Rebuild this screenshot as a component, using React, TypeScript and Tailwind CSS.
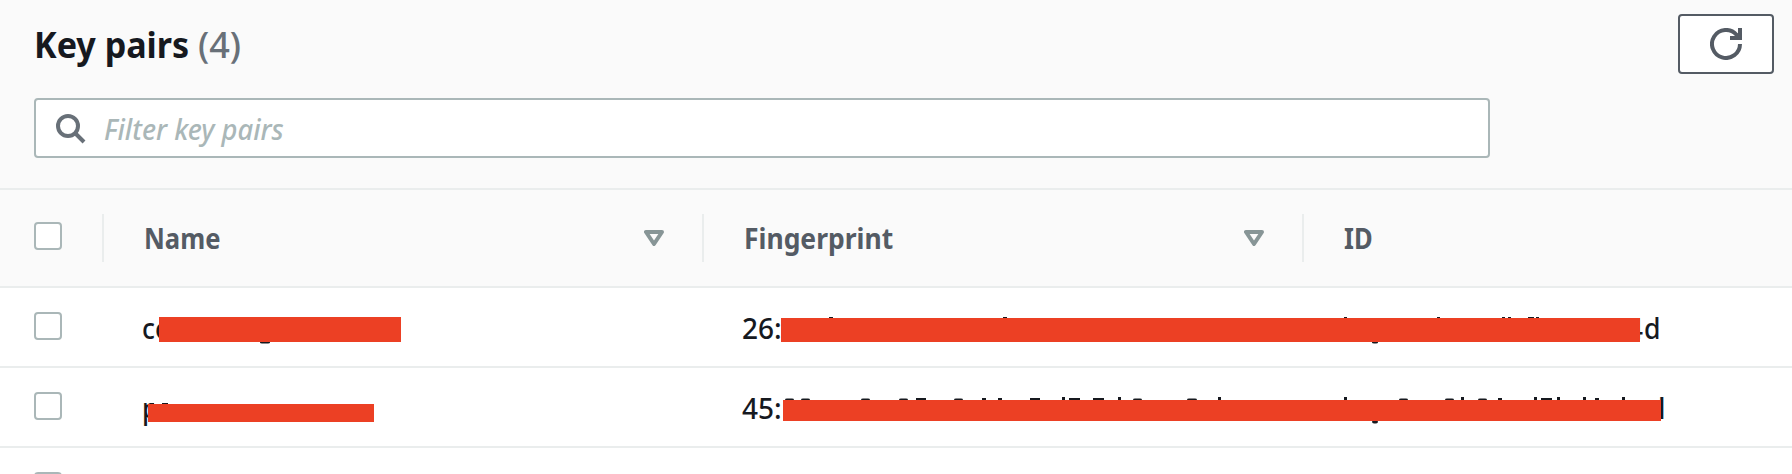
import type { ReactNode } from "react";

function Checkbox() {
  return <span className="block h-7 w-7 shrink-0 rounded border-2 border-[#aab7b8] bg-white" />;
}

function SortIcon() {
  return (
    <svg className="h-4 w-5 shrink-0" viewBox="0 0 20 16" fill="none">
      <path d="M2 2H18L10 14Z" stroke="#879596" strokeWidth="4" strokeLinejoin="round" />
    </svg>
  );
}

function HeaderCell({ label, sortable, scale }: { label: string; sortable?: boolean; scale: string }) {
  return (
    <div className={`flex h-12 items-center justify-between border-l-2 border-[#eaeded] pl-10 ${sortable ? "w-[600px] pr-[38px]" : "grow"}`}>
      <span className={`block origin-left text-[28px] leading-[48px] font-bold text-[#545b64] ${scale}`}>{label}</span>
      {sortable && <SortIcon />}
    </div>
  );
}

/* Slivers of the covered text that stay visible along the bars: [x, y, width, height] */
const slivers1 = [
  [260, 53, 10, 2.5], [829, 29, 4, 1], [1003, 29, 4, 1], [1344, 29, 3, 1], [1372, 53, 6, 2.5],
  [1437, 29, 3, 1], [1502, 29, 3, 1], [1508, 29, 3, 1], [1528, 29, 6, 1], [1536, 29, 3, 1],
];
const slivers2 = [
  [150, 35, 4, 1], [162, 35, 6, 1],
  [785, 30.5, 9, 2.5], [801, 30.5, 9, 2.5], [861, 30.5, 9, 2.5], [899, 30.5, 9, 2.5], [916, 30, 10, 2],
  [954, 30.5, 9, 2.5], [982, 30, 4, 2], [998, 30, 4, 2], [1030, 30, 10, 2], [1062, 29, 3, 3], [1069, 30, 11, 2],
  [1093, 30, 11, 2], [1118, 29, 3, 3], [1133, 30.5, 9, 2.5], [1187, 30.5, 10, 2.5], [1218, 29, 3, 3],
  [1344, 29, 3, 3], [1372, 52, 6, 3.5], [1399, 30.5, 9, 2.5], [1445, 30.5, 9, 2.5], [1461, 29, 3, 3],
  [1478, 30.5, 9, 2.5], [1498, 30, 4, 2], [1534, 29, 3, 3], [1541, 30, 11, 2], [1557, 29, 3, 3],
  [1583, 29, 3, 3], [1595, 30, 4, 2], [1622, 29, 3, 3],
];

function Slivers({ marks }: { marks: number[][] }) {
  return (
    <svg className="absolute top-0 left-0 h-20 w-[1792px]" viewBox="0 0 1792 80" fill="#16191f">
      {marks.map(([x, y, w, h], i) => (
        <rect key={i} x={x} y={y} width={w} height={h} rx={h === 2.5 || h === 3.5 ? 2 : 0} />
      ))}
    </svg>
  );
}

function Row({ name, fingerprint, children }: { name: string; fingerprint: string; children: ReactNode }) {
  return (
    <div className="relative flex h-20 items-center border-b-2 border-[#eaeded] pl-[34px] text-[28px] leading-10 font-medium text-[#16191f]">
      <div className="w-[108px] pb-[2px]"><Checkbox /></div>
      <span className="w-[600px] pt-0.5"><span className="inline-block origin-left scale-x-[0.94]">{name}</span></span>
      <span className="pt-0.5"><span className="inline-block origin-left">{fingerprint}</span></span>
      {children}
    </div>
  );
}

export default function App() {
  return (
    <div className="h-[474px] w-[1792px] overflow-hidden bg-white [font-family:'Noto_Sans',sans-serif]">
      <header className="h-[190px] border-b-2 border-[#eaeded] bg-[#fafafa] pt-[14px] pr-[18px] pl-[34px]">
        <div className="flex h-[60px] items-start justify-between">
          <h1 className="flex text-[36px] leading-[62px] text-[#16191f]">
            <span className="block w-[164px] origin-left scale-x-[0.947] font-bold whitespace-nowrap">Key pairs</span>
            <span className="block origin-left font-medium text-[#687078]">(4)</span>
          </h1>
          <button className="flex h-[60px] w-24 items-center justify-center rounded border-2 border-[#545b64] bg-white">
            <svg className="h-8 w-8" viewBox="0 0 32 32" fill="none" stroke="#545b64" strokeWidth="4">
              <path d="M30 16A14 14 0 1 1 26.5 6.7L30 10" />
              <path d="M20 10H30V0" />
            </svg>
          </button>
        </div>
        <div className="mt-6 flex h-[60px] w-[1456px] items-center rounded border-2 border-[#aab7b8] bg-white pl-5">
          <svg className="h-8 w-8 shrink-0" viewBox="0 0 32 32" fill="none" stroke="#687078" strokeWidth="4">
            <circle cx="12" cy="14" r="10" />
            <path d="M19 21L28 30" />
          </svg>
          <span className="mt-0.5 ml-4 block origin-left scale-x-[0.975] text-[28px] leading-[60px] font-medium text-[#aab7b8] italic">Filter key pairs</span>
        </div>
      </header>
      <div className="flex h-[98px] items-start border-b-2 border-[#eaeded] bg-[#fafafa] pt-6 pl-[34px]">
        <div className="w-[68px] pt-2"><Checkbox /></div>
        <HeaderCell label="Name" sortable scale="scale-x-[0.915]" />
        <HeaderCell label="Fingerprint" sortable scale="scale-x-[0.945]" />
        <HeaderCell label="ID" scale="scale-x-[0.91]" />
      </div>
      <Row name="co" fingerprint="26:">
        <Slivers marks={slivers1} />
        <span className="absolute top-[29px] left-[159px] h-[25px] w-[242px] bg-[#ec4024]" />
        <span className="absolute top-5 left-[1627px] flex">4<span className="ml-px block origin-left scale-x-[0.95]">d</span></span>
        <span className="absolute top-[30px] left-[781px] h-6 w-[859px] bg-[#ec4024]" />
      </Row>
      <Row name="p" fingerprint="45:">
        <Slivers marks={slivers2} />
        <span className="absolute top-[36px] left-[148px] h-[18px] w-[226px] bg-[#ec4024]" />
        <span className="absolute top-5 left-[1658px]">l</span>
        <span className="absolute top-[32px] left-[783px] h-[21px] w-[878px] bg-[#ec4024]" />
      </Row>
      <div className="h-20 pt-6 pl-[34px]"><Checkbox /></div>
    </div>
  );
}
